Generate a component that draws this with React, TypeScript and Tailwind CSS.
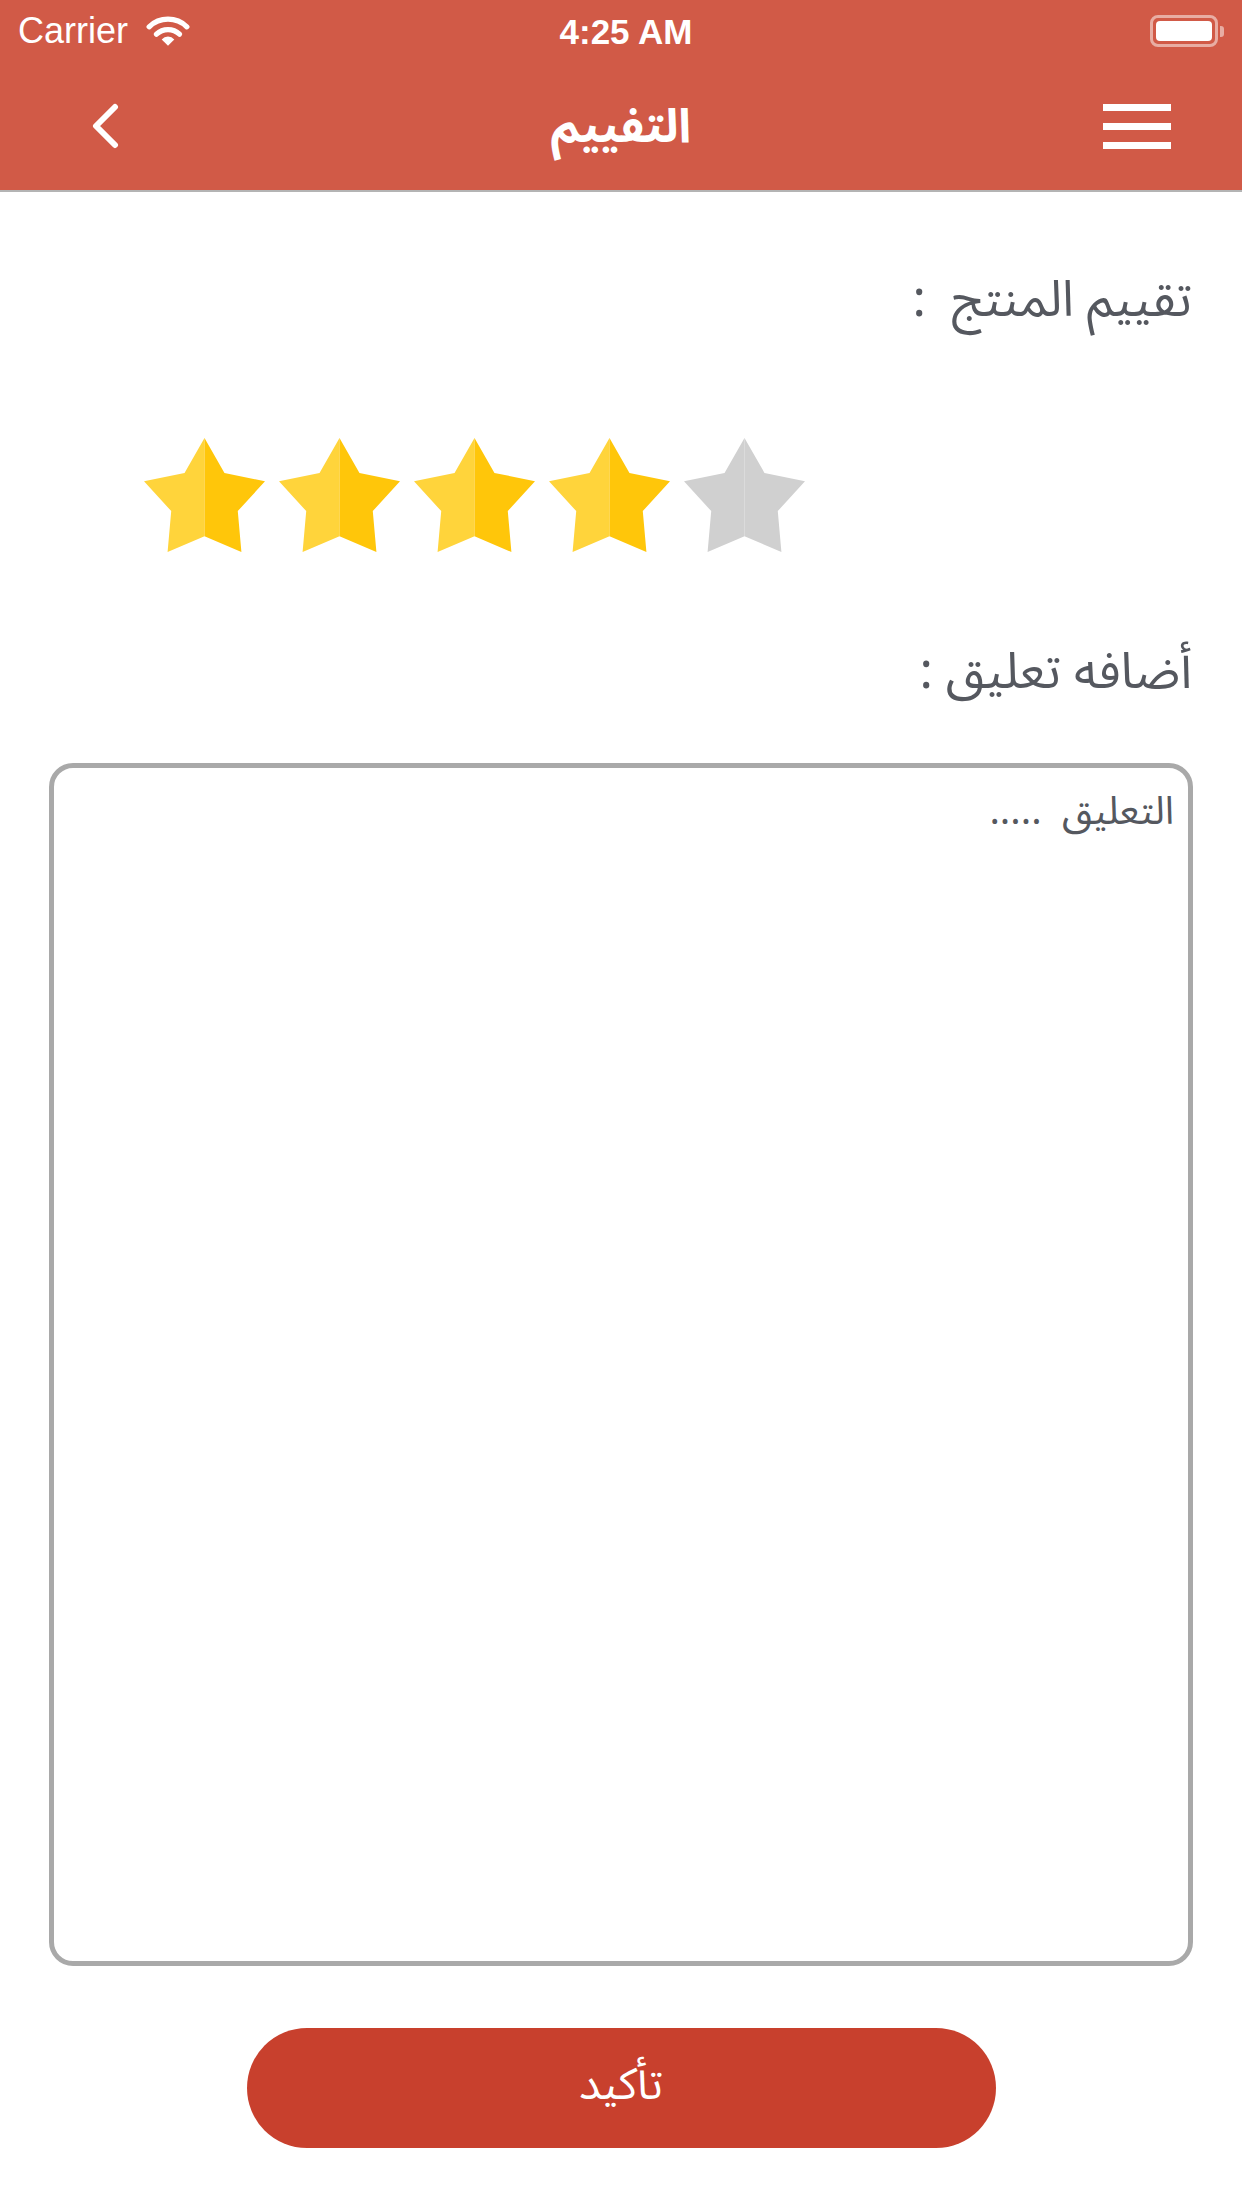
import React from "react";

const arabic = { fontFamily: '"Noto Sans Arabic", "DejaVu Sans", sans-serif' };

function Star({ on }: { on: boolean }) {
    const left = on ? "#FFD43B" : "#D0D0D0";
    const right = on ? "#FFC60A" : "#D0D0D0";
    return (
        <svg width="121" height="114" viewBox="0 0 100 100" preserveAspectRatio="none">
            <polygon points="50,0 33.5,30.6 0,38 22.5,64.1 19.5,100 50,86.2" fill={left} />
            <polygon points="50,0 66.5,30.6 100,38 77.5,64.1 80.5,100 50,86.2" fill={right} />
        </svg>
    );
}

export default function App() {
    const rating = 4;

    return (
        <div className="w-[1242px] h-[2208px] bg-white flex flex-col">
            {/* Header */}
            <header className="bg-[#d15a47] h-[192px] border-b-2 border-[#b4b4b4] flex flex-col text-white">
                <div className="h-[62px] grid grid-cols-3 items-center px-[18px]" style={{ fontFamily: '"Liberation Sans", sans-serif' }}>
                    <div className="flex items-center gap-[18px] text-[36px] leading-none">
                        <span>Carrier</span>
                        <svg width="44" height="32" viewBox="0 0 42 30">
                            <path d="M3 11 A26 26 0 0 1 39 11" stroke="white" strokeWidth="5" fill="none" strokeLinecap="round" />
                            <path d="M10 18 A16 16 0 0 1 32 18" stroke="white" strokeWidth="5" fill="none" strokeLinecap="round" />
                            <path d="M21 29 L15 23 A8 8 0 0 1 27 23 Z" fill="white" />
                        </svg>
                    </div>
                    <div className="text-center text-[35px] font-semibold leading-none pl-[10px]">4:25 AM</div>
                    <div className="flex justify-end items-center">
                        <div className="w-[68px] h-[32px] rounded-[8px] border-[3px] border-white/50 p-[3px]">
                            <div className="w-full h-full rounded-[4px] bg-white" />
                        </div>
                        <div className="w-[4px] h-[11px] rounded-r-[3px] bg-white/50 ml-[2px]" />
                    </div>
                </div>
                <div className="flex-1 grid grid-cols-[1fr_auto_1fr] items-center">
                    <div className="pl-[89px]">
                        <svg width="30" height="46" viewBox="0 0 30 46">
                            <path d="M26 4 L7 23 L26 42" stroke="white" strokeWidth="6" fill="none" strokeLinecap="round" strokeLinejoin="round" />
                        </svg>
                    </div>
                    <h1 className="text-[47px] font-bold leading-none pt-[2px]" style={arabic} dir="rtl">التفييم</h1>
                    <div className="flex justify-end pr-[71px]">
                        <div className="w-[68px] flex flex-col gap-[12px]">
                            <div className="h-[7px] bg-white" />
                            <div className="h-[7px] bg-white" />
                            <div className="h-[7px] bg-white" />
                        </div>
                    </div>
                </div>
            </header>

            {/* Content */}
            <main className="flex flex-col text-[#55585f]" style={arabic}>
                <p dir="rtl" className="mt-[78px] pr-[50px] text-[50px] leading-[60px]">تقييم المنتج&nbsp; :</p>

                <div className="mt-[108px] ml-[144px] flex gap-[14px]">
                    {[1, 2, 3, 4, 5].map((n) => (
                        <Star key={n} on={n <= rating} />
                    ))}
                </div>

                <p dir="rtl" className="mt-[90px] pr-[50px] text-[50px] leading-[60px]">أضافه تعليق :</p>

                <textarea
                    dir="rtl"
                    placeholder="التعليق  ....."
                    className="mt-[61px] mx-[49px] h-[1203px] border-[5px] border-[#a9a9a9] rounded-[24px] pt-[22px] pr-[14px] pl-[14px] text-[39px] leading-[44px] resize-none outline-none placeholder:text-[#55585f]"
                    style={arabic}
                />

                <div className="mt-[62px] flex justify-center">
                    <button className="w-[749px] h-[120px] rounded-full bg-[#c8402d] text-white text-[44px] leading-none pb-[6px]" style={arabic}>
                        تأكيد
                    </button>
                </div>
            </main>
        </div>
    );
}
